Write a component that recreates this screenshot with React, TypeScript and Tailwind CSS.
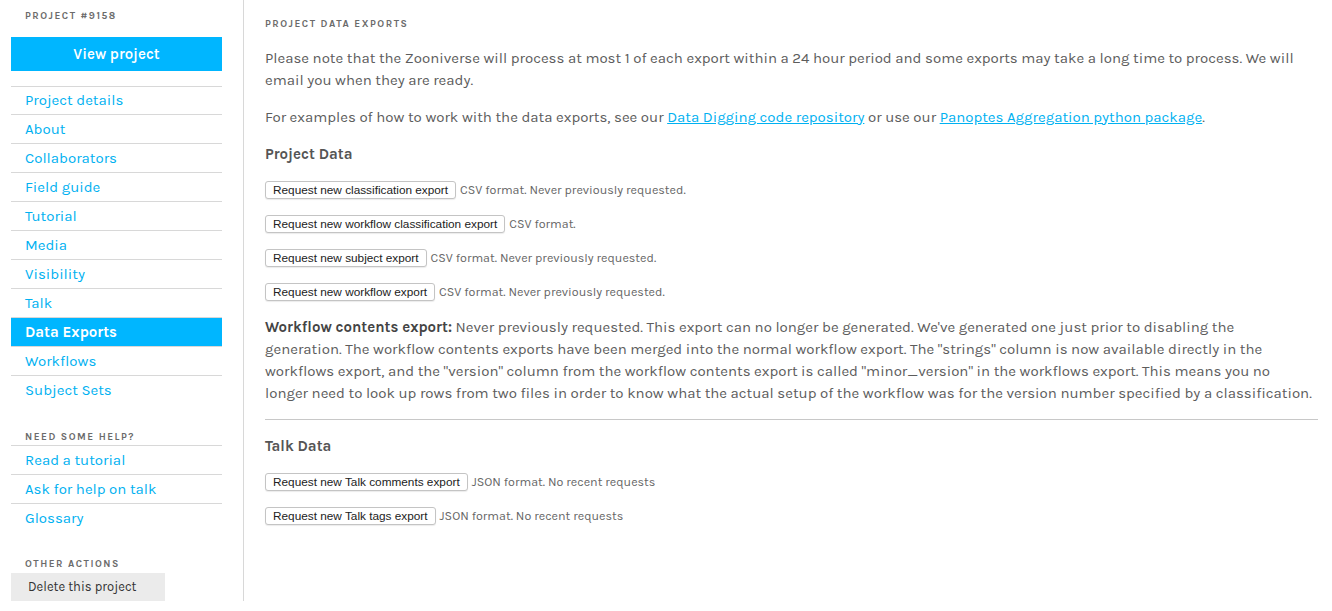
import React from "react";

const NAV = ["Project details", "About", "Collaborators", "Field guide", "Tutorial", "Media", "Visibility", "Talk", "Data Exports", "Workflows", "Subject Sets"];
const HELP = ["Read a tutorial", "Ask for help on talk", "Glossary"];

const font = { fontFamily: "Karla, 'Open Sans', sans-serif" };

function ExportRow({ label, note }: { label: string; note: string }) {
    return (
        <div className="flex items-center gap-[4px] h-[18px]">
            <button className="h-[18px] px-[7px] pt-[1px] border border-[#c4c4c4] rounded-[3px] bg-white text-[11.8px] leading-none text-[#222] font-['Liberation_Sans',sans-serif] shadow-[0_1px_1px_rgba(0,0,0,0.08)]">
                {label}
            </button>
            <span className="text-[12.5px] text-[#666]">{note}</span>
        </div>
    );
}

export default function App() {
    return (
        <div className="flex w-[1332px] h-[611px] bg-white text-[#5c5c5c]" style={font}>
            <aside className="w-[244px] shrink-0 border-r border-[#d8d8d8] pl-[11px] pr-[21px] mb-[10px]">
                <div className="pt-[9px] px-[14px] text-[10px] font-bold tracking-[0.15em] text-[#6b6b6b]">PROJECT #9158</div>
                <button className="mt-[13px] w-full h-[34px] bg-[#00b6ff] text-white text-[15px] font-semibold">View project</button>
                <ul className="mt-[15px]">
                    {NAV.map((n, i) => (
                        <li
                            key={n}
                            className={`h-[29px] flex items-center px-[14px] text-[15px] ${i === NAV.length - 1 ? "" : "border-b border-[#d8d8d8]"} ${i === 0 ? "border-t" : ""} ${n === "Data Exports" ? "bg-[#00b6ff] text-white font-bold" : "text-[#00b1f1]"}`}
                        >
                            {n}
                        </li>
                    ))}
                </ul>
                <div className="mt-[25px] px-[14px] text-[10px] font-bold tracking-[0.15em] text-[#6b6b6b]">NEED SOME HELP?</div>
                <ul>
                    {HELP.map((n) => (
                        <li key={n} className="h-[29px] flex items-center px-[14px] text-[15px] text-[#00b1f1] border-t border-[#d8d8d8]">
                            {n}
                        </li>
                    ))}
                </ul>
                <div className="mt-[25px] px-[14px] text-[10px] font-bold tracking-[0.15em] text-[#6b6b6b]">OTHER ACTIONS</div>
                <button className="mt-[1px] w-[154px] h-[28px] bg-[#ebebeb] text-left px-[17px] text-[13px] text-[#333]">Delete this project</button>
            </aside>
            <main className="flex-1 pl-[21px] pr-[14px]">
                <div className="pt-[17px] text-[10px] font-bold tracking-[0.15em] text-[#6b6b6b]">PROJECT DATA EXPORTS</div>
                <p className="mt-[15px] text-[15px] leading-[22px]">
                    Please note that the Zooniverse will process at most 1 of each export within a 24 hour period and some exports may take a long time to process. We will email you when they are ready.
                </p>
                <p className="mt-[15px] text-[15px] leading-[22px]">
                    For examples of how to work with the data exports, see our{" "}
                    <a className="text-[#00b1f1] underline">Data Digging code repository</a> or use our{" "}
                    <a className="text-[#00b1f1] underline">Panoptes Aggregation python package</a>.
                </p>
                <h3 className="mt-[15px] text-[15px] font-bold text-[#555] leading-[22px]">Project Data</h3>
                <div className="mt-[16px] flex flex-col gap-[16px]">
                    <ExportRow label="Request new classification export" note="CSV format. Never previously requested." />
                    <ExportRow label="Request new workflow classification export" note="CSV format." />
                    <ExportRow label="Request new subject export" note="CSV format. Never previously requested." />
                    <ExportRow label="Request new workflow export" note="CSV format. Never previously requested." />
                </div>
                <p className="mt-[15px] text-[15px] leading-[22px] whitespace-nowrap">
                    <b className="text-[#444]">Workflow contents export:</b> Never previously requested. This export can no longer be generated. We've generated one just prior to disabling the
                    <br />
                    generation. The workflow contents exports have been merged into the normal workflow export. The "strings" column is now available directly in the
                    <br />
                    workflows export, and the "version" column from the workflow contents export is called "minor_version" in the workflows export. This means you no
                    <br />
                    longer need to look up rows from two files in order to know what the actual setup of the workflow was for the version number specified by a classification.
                </p>
                <hr className="mt-[15px] border-t border-[#c8c8c8]" />
                <h3 className="mt-[15px] text-[15px] font-bold text-[#555] leading-[22px]">Talk Data</h3>
                <div className="mt-[16px] flex flex-col gap-[16px]">
                    <ExportRow label="Request new Talk comments export" note="JSON format. No recent requests" />
                    <ExportRow label="Request new Talk tags export" note="JSON format. No recent requests" />
                </div>
            </main>
        </div>
    );
}
